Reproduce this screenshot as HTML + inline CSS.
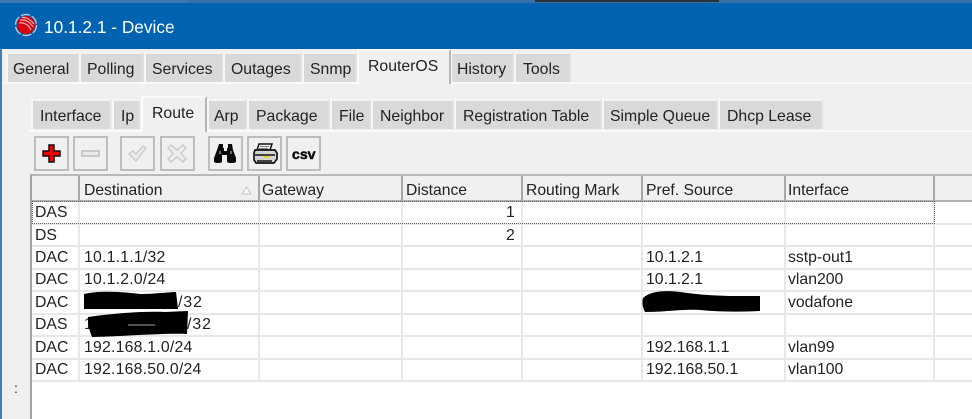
<!DOCTYPE html>
<html><head><meta charset="utf-8"><style>
html,body{margin:0;padding:0;width:972px;height:419px;overflow:hidden;background:#f0f0f0}
body{position:relative;font-family:"Liberation Sans",sans-serif;font-size:15.8px;color:#222;}
div,span,svg{position:absolute;box-sizing:border-box}
.t{white-space:nowrap;line-height:18px;height:18px;filter:blur(.3px)}
.d{letter-spacing:.22px}
.s{letter-spacing:1px}
.hd{font-size:15.7px;top:182px}
.tab{background:#d9d9d9;border:2px solid #f4f4f4;border-bottom:none;border-left-color:#f7f7f7;border-right:2px solid #e0e0e0}
.act{background:#f0f0f0;border:2px solid #fafafa;border-bottom:none;border-right:2px solid #b5b5b5}
.btn{top:136px;width:35px;height:35px;background:#f0f0f0;border:2px solid #bdbdbd}
.v{top:176px;width:2px;height:205px;background:#e8e8e8}
.vh{top:176px;width:2px;height:26px;background:#a8a8a8}
.h{left:32px;width:940px;height:2px;background:#e8e8e8}
</style></head><body>
<div style="left:0;top:0;width:972px;height:3px;background:#3f78ae"></div>
<div style="left:188px;top:0;width:784px;height:3px;background:#3871a8"></div>
<div style="left:535px;top:0;width:184px;height:2px;background:#2a2f3a"></div>
<div style="left:0;top:3px;width:972px;height:46px;background:#0063b1"></div>
<div style="left:0;top:49px;width:2px;height:370px;background:#3f7fb8"></div>
<svg style="left:14px;top:13px" width="24" height="24" viewBox="0 0 24 24"><circle cx="12" cy="12" r="10.5" fill="none" stroke="#b9c6d4" stroke-width="1.4" stroke-dasharray="9 2"/><circle cx="12" cy="12" r="9" fill="#d8000e"/><path d="M5 10 C10 9 15 12 17 17 M6 7 C11 6 16 9 19 14 M8 4.500 C12 4 17 7 20 11" fill="none" stroke="#ffc0c0" stroke-width="1.100"/></svg>
<div class="t" style="left:44px;top:18px;color:#fff;font-size:17.300px">10.1.2.1 - Device</div>

<div style="left:2px;top:82px;width:970px;height:2px;background:#fafafa"></div>
<div class="tab" style="left:6px;top:52px;width:73px;height:30px"></div><div class="t" style="left:13px;top:61px">General</div>
<div class="tab" style="left:79px;top:52px;width:65px;height:30px"></div><div class="t" style="left:87px;top:61px">Polling</div>
<div class="tab" style="left:144px;top:52px;width:79px;height:30px"></div><div class="t" style="left:152px;top:61px">Services</div>
<div class="tab" style="left:223px;top:52px;width:79px;height:30px"></div><div class="t" style="left:231px;top:61px">Outages</div>
<div class="tab" style="left:302px;top:52px;width:55px;height:30px"></div><div class="t" style="left:310px;top:61px">Snmp</div>
<div class="tab" style="left:450px;top:52px;width:64px;height:30px"></div><div class="t" style="left:457px;top:61px">History</div>
<div class="tab" style="left:514px;top:52px;width:57px;height:30px"></div><div class="t" style="left:523px;top:61px">Tools</div>
<div class="act" style="left:357px;top:49px;width:94px;height:35px"></div><div class="t" style="left:368px;top:58px">RouterOS</div>

<div style="left:29px;top:130px;width:943px;height:2px;background:#fafafa"></div>
<div class="tab" style="left:31px;top:99px;width:80px;height:30px"></div><div class="t" style="left:40px;top:108px">Interface</div>
<div class="tab" style="left:112px;top:99px;width:28px;height:30px"></div><div class="t" style="left:121px;top:108px">Ip</div>
<div class="tab" style="left:207px;top:99px;width:40px;height:30px"></div><div class="t" style="left:214px;top:108px">Arp</div>
<div class="tab" style="left:247px;top:99px;width:83px;height:30px"></div><div class="t" style="left:256px;top:108px">Package</div>
<div class="tab" style="left:330px;top:99px;width:41px;height:30px"></div><div class="t" style="left:339px;top:108px">File</div>
<div class="tab" style="left:371px;top:99px;width:83px;height:30px"></div><div class="t" style="left:380px;top:108px">Neighbor</div>
<div class="tab" style="left:454px;top:99px;width:148px;height:30px"></div><div class="t" style="left:463px;top:108px">Registration Table</div>
<div class="tab" style="left:602px;top:99px;width:116px;height:30px"></div><div class="t" style="left:610px;top:108px">Simple Queue</div>
<div class="tab" style="left:718px;top:99px;width:105px;height:30px"></div><div class="t" style="left:727px;top:108px">Dhcp Lease</div>
<div class="act" style="left:141px;top:96px;width:66px;height:36px"></div><div class="t" style="left:152px;top:105px">Route</div>

<div class="btn" style="left:34px"></div>
<svg style="left:34px;top:136px" width="35" height="35" viewBox="0 0 35 35"><path d="M15 9h5v6h6v5h-6v6h-5v-6h-6v-5h6z" fill="#f00000" stroke="#111" stroke-width="1.500"/></svg>
<div class="btn" style="left:73px"></div>
<svg style="left:73px;top:136px" width="35" height="35" viewBox="0 0 35 35"><rect x="9" y="15" width="17" height="5" fill="#e9e9e9" stroke="#bdbdbd" stroke-width="1.500"/></svg>
<div class="btn" style="left:120px"></div>
<svg style="left:120px;top:136px" width="35" height="35" viewBox="0 0 35 35"><path d="M9 18l4-3 3 3 7-8 3 2-10 13z" fill="#ececec" stroke="#c8c8c8" stroke-width="1.300"/></svg>
<div class="btn" style="left:160px"></div>
<svg style="left:160px;top:136px" width="35" height="35" viewBox="0 0 35 35"><path d="M11 9l6 5 6-5 3 3-5 5.500 5 5.500-3 3-6-5-6 5-3-3 5-5.500-5-5.500z" fill="#ececec" stroke="#c8c8c8" stroke-width="1.300"/></svg>
<div class="btn" style="left:208px"></div>
<svg style="left:208px;top:136px" width="35" height="35" viewBox="0 0 35 35"><path d="M11 8h4v4h1v3h3v-3h1V8h4l1 6 3 8v4l-2 1h-5l-2-1v-7h-5v7l-2 1H8l-2-1v-4l3-8z" fill="#0a0a0a"/><path d="M12 15v3M23 15v3" stroke="#ccc" stroke-width="1"/></svg>
<div class="btn" style="left:247px"></div>
<svg style="left:247px;top:136px" width="35" height="35" viewBox="0 0 35 35"><path d="M12 8h13l-2 6H10z" fill="#f4f4f4" stroke="#111" stroke-width="1.500"/><path d="M13 10.500h9M12 12.500h9" stroke="#555" stroke-width=".8"/><path d="M8 14h20l2 3v6l-3 4H9l-2-3v-7z" fill="#d4d4d4" stroke="#111" stroke-width="1.700"/><path d="M8 19h20" stroke="#111" stroke-width="1.500"/><rect x="16" y="20" width="7" height="2" fill="#e3d832"/><path d="M10 25h15" stroke="#111" stroke-width="1.500"/></svg>
<div class="btn" style="left:286px"></div>
<div style="left:286px;top:136px;width:35px;height:35px;text-align:center;font:bold 14px/40px 'Liberation Mono',monospace;color:#0a0a0a;letter-spacing:-.6px;-webkit-text-stroke:.5px #0a0a0a">csv</div>

<div style="left:30px;top:174px;width:942px;height:245px;background:#fff;border-left:2px solid #a3a3a3;border-top:2px solid #b9b9b9"></div>
<div style="left:32px;top:176px;width:940px;height:26px;background:#f0f0f0;border-bottom:2px solid #b0b0b0"></div>
<div class="v" style="left:78px"></div><div class="v" style="left:258px"></div><div class="v" style="left:401px"></div><div class="v" style="left:521px"></div><div class="v" style="left:641px"></div><div class="v" style="left:784px"></div><div class="v" style="left:933px"></div>
<div class="vh" style="left:78px"></div><div class="vh" style="left:258px"></div><div class="vh" style="left:401px"></div><div class="vh" style="left:521px"></div><div class="vh" style="left:641px"></div><div class="vh" style="left:784px"></div><div class="vh" style="left:933px"></div>
<div class="h" style="top:223px"></div><div class="h" style="top:245px"></div><div class="h" style="top:268px"></div><div class="h" style="top:290px"></div><div class="h" style="top:313px"></div><div class="h" style="top:335px"></div><div class="h" style="top:358px"></div><div class="h" style="top:380px"></div>
<div style="left:32px;top:201px;width:903px;height:23px;border:1px dotted #666"></div>
<svg style="left:241px;top:186px" width="11" height="9" viewBox="0 0 11 9"><path d="M1 8L5.500 1 10 8z" fill="#f8f8f8" stroke="#c4c4c4"/></svg>

<div class="t hd" style="left:84px">Destination</div><div class="t hd" style="left:262px">Gateway</div><div class="t hd" style="left:406px">Distance</div><div class="t hd" style="left:526px">Routing Mark</div><div class="t hd" style="left:646px">Pref. Source</div><div class="t hd" style="left:788px">Interface</div>

<div class="t" style="left:35px;top:204px">DAS</div><div class="t" style="left:506px;top:204px">1</div>
<div class="t" style="left:35px;top:227px">DS</div><div class="t" style="left:506px;top:227px">2</div>
<div class="t" style="left:35px;top:249px">DAC</div><div class="t d" style="left:84px;top:249px">10.1.1.1/32</div><div class="t" style="left:646px;top:249px">10.1.2.1</div><div class="t" style="left:788px;top:249px">sstp-out1</div>
<div class="t" style="left:35px;top:271px">DAC</div><div class="t d" style="left:84px;top:271px">10.1.2.0/24</div><div class="t" style="left:646px;top:271px">10.1.2.1</div><div class="t" style="left:788px;top:271px">vlan200</div>
<div class="t" style="left:35px;top:294px">DAC</div><div class="t s" style="left:178px;top:294px">/32</div><div class="t" style="left:788px;top:294px">vodafone</div>
<div class="t" style="left:35px;top:316px">DAS</div><div class="t" style="left:84px;top:316px">1</div><div class="t s" style="left:187px;top:316px">/32</div>
<div class="t" style="left:35px;top:339px">DAC</div><div class="t d" style="left:84px;top:339px">192.168.1.0/24</div><div class="t" style="left:646px;top:339px">192.168.1.1</div><div class="t" style="left:788px;top:339px">vlan99</div>
<div class="t" style="left:35px;top:361px">DAC</div><div class="t d" style="left:84px;top:361px">192.168.50.0/24</div><div class="t" style="left:646px;top:361px">192.168.50.1</div><div class="t" style="left:788px;top:361px">vlan100</div>

<svg style="left:0;top:0;pointer-events:none" width="972" height="419" viewBox="0 0 972 419">
<path d="M84 294C100 290 125 292 140 294C155 294 170 292 176 292L178 309H84z" fill="#000"/>
<path d="M88 317C110 314 140 311 165 312L188 311L187 334C165 333 130 336 92 337C89 330 88 324 88 317z" fill="#000"/>
<path d="M128 325h27" stroke="#ddd" stroke-width=".8"/>
<path d="M643 298C650 291 665 290 680 292C700 295 720 296 736 296L760 296V311C740 312 720 312 700 310C680 309 668 312 645 312C642 306 642 302 643 298z" fill="#000"/>
</svg>
<div class="t" style="left:14px;top:379px;font-size:14px">:</div>
</body></html>
